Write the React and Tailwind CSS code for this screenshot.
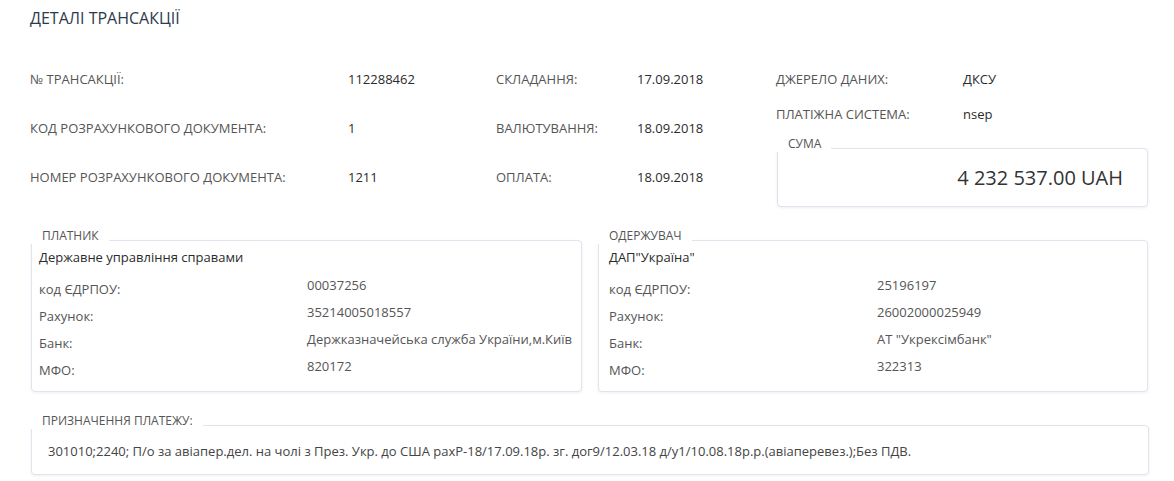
import React from "react";

const font = { fontFamily: '"Open Sans", "Noto Sans", sans-serif' };

function TopRow({ label, value, labelW, h }) {
  return (
    <div className={`flex items-center ${h}`}>
      <div className={`${labelW} shrink-0 text-[13px] leading-[18px] text-[#555]`}>{label}</div>
      <div className="text-[13px] leading-[18px] font-medium text-[#2b2b2b]">{value}</div>
    </div>
  );
}

function Box({ title, className, children }) {
  return (
    <div className={`relative border border-[#dfe4ee] rounded-[4px] bg-white shadow-[0_1px_3px_rgba(40,50,90,0.08)] ${className}`}>
      <div className="absolute -top-[13px] -left-[2px] bg-white pl-[12px] pr-[10px] text-[12px] leading-[16px] text-[#555]">
        {title}
      </div>
      {children}
    </div>
  );
}

function PartyRow({ label, value, labelW }) {
  return (
    <div className="flex items-center h-[27px]">
      <div className={`${labelW} shrink-0 text-[13px] leading-[18px] text-[#555]`}>{label}</div>
      <div className="pb-[8px] text-[13px] leading-[18px] text-[#555]">{value}</div>
    </div>
  );
}

function Party({ title, name, rows, className, labelW, pl }) {
  return (
    <Box title={title} className={`h-[152px] ${className}`}>
      <div className={`pt-[7px] ${pl}`}>
        <div className="h-[20px] flex items-center text-[13px] font-medium text-[#2b2b2b]">{name}</div>
        <div className="mt-[7px]">
          {rows.map(([l, v]) => (
            <PartyRow key={l} label={l} value={v} labelW={labelW} />
          ))}
        </div>
      </div>
    </Box>
  );
}

export default function App() {
  return (
    <div style={font} className="w-[1174px] h-[481px] bg-white overflow-hidden pl-[30px] pr-[25px]">
      <div className="pt-[8px] h-[28px] text-[16px] leading-[20px] font-medium text-[#2d3a4b]">
        ДЕТАЛІ ТРАНСАКЦІЇ
      </div>

      <div className="flex items-start mt-[26px]">
        <div className="w-[466px] shrink-0">
          <TopRow label="№ ТРАНСАКЦІЇ:" value="112288462" labelW="w-[318px]" h="h-[49px]" />
          <TopRow label="КОД РОЗРАХУНКОВОГО ДОКУМЕНТА:" value="1" labelW="w-[318px]" h="h-[49px]" />
          <TopRow label="НОМЕР РОЗРАХУНКОВОГО ДОКУМЕНТА:" value="1211" labelW="w-[318px]" h="h-[49px]" />
        </div>
        <div className="w-[280px] shrink-0">
          <TopRow label="СКЛАДАННЯ:" value="17.09.2018" labelW="w-[141px]" h="h-[49px]" />
          <TopRow label="ВАЛЮТУВАННЯ:" value="18.09.2018" labelW="w-[141px]" h="h-[49px]" />
          <TopRow label="ОПЛАТА:" value="18.09.2018" labelW="w-[141px]" h="h-[49px]" />
        </div>
        <div className="flex-1 pt-[7px]">
          <TopRow label="ДЖЕРЕЛО ДАНИХ:" value="ДКСУ" labelW="w-[187px]" h="h-[35px]" />
          <TopRow label="ПЛАТІЖНА СИСТЕМА:" value="nsep" labelW="w-[187px]" h="h-[35px]" />
          <Box title="СУМА" className="mt-[17px] ml-[1px] w-[371px] h-[59px] flex items-center justify-end pr-[24px]">
            <div className="text-[20px] leading-[26px] text-[#333]">4 232 537.00 UAH</div>
          </Box>
        </div>
      </div>

      <div className="flex mt-[33px] ml-[1px] gap-[16px]">
        <Party
          title="ПЛАТНИК"
          name="Державне управління справами"
          className="w-[551px]"
          labelW="w-[268px]"
          pl="pl-[7px]"
          rows={[
            ["код ЄДРПОУ:", "00037256"],
            ["Рахунок:", "35214005018557"],
            ["Банк:", "Держказначейська служба України,м.Київ"],
            ["МФО:", "820172"],
          ]}
        />
        <Party
          title="ОДЕРЖУВАЧ"
          name={'ДАП"Україна"'}
          className="w-[550px]"
          labelW="w-[268px]"
          pl="pl-[10px]"
          rows={[
            ["код ЄДРПОУ:", "25196197"],
            ["Рахунок:", "26002000025949"],
            ["Банк:", 'АТ "Укрексімбанк"'],
            ["МФО:", "322313"],
          ]}
        />
      </div>

      <Box title="ПРИЗНАЧЕННЯ ПЛАТЕЖУ:" className="mt-[33px] ml-[1px] w-[1118px] h-[50px] flex items-center pl-[16px] pt-[2px]">
        <div className="text-[13px] leading-[18px] text-[#444]">
          301010;2240; П/о за авіапер.дел. на чолі з През. Укр. до США рахР-18/17.09.18р. зг. дог9/12.03.18 д/у1/10.08.18р.р.(авіаперевез.);Без ПДВ.
        </div>
      </Box>
    </div>
  );
}
